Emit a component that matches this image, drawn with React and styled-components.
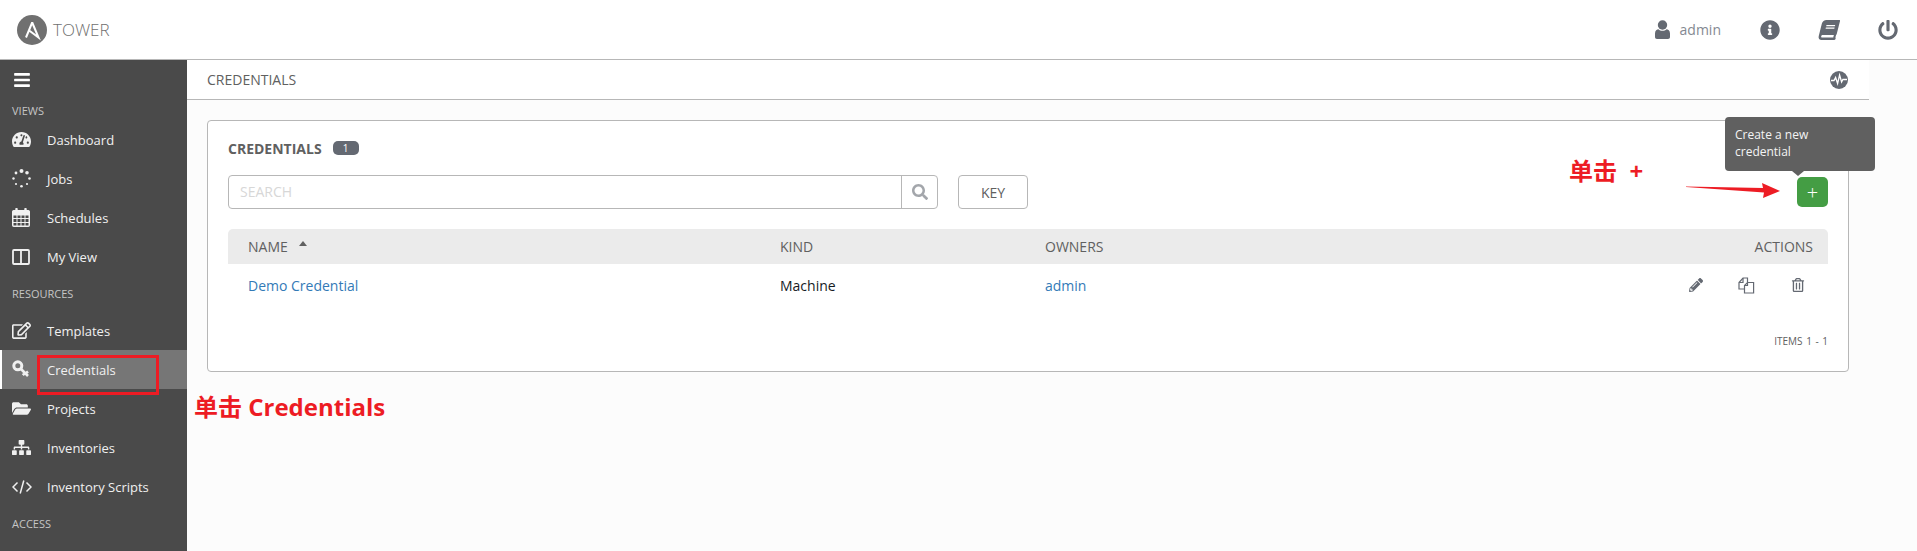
import styled, { createGlobalStyle } from 'styled-components';
import {
  FaBars,
  FaTachometerAlt,
  FaRegEdit,
  FaFolderOpen,
  FaSitemap,
  FaInfoCircle,
  FaBook,
  FaPowerOff,
  FaSearch,
  FaPencilAlt,
  FaRegTrashAlt,
} from 'react-icons/fa';

const GlobalStyle = createGlobalStyle`
  html, body {
    margin: 0;
    padding: 0;
    height: 100%;
    overflow: hidden;
    background: #fcfcfc;
    font-family: "Open Sans", "Noto Sans", sans-serif;
    color: #161b1f;
  }
  * { box-sizing: border-box; }
`;

const JobsIcon = () => (
  <svg width="19" height="19" viewBox="0 0 19 19" fill="currentColor">
    <circle cx="9.500" cy="2" r="2" />
    <circle cx="15" cy="3.800" r="1.800" />
    <circle cx="17.500" cy="9.500" r="1.300" />
    <circle cx="15" cy="15" r="1.100" />
    <circle cx="9.500" cy="17.300" r="1.300" />
    <circle cx="4" cy="15" r="1.100" />
    <circle cx="1.500" cy="9.500" r="1.200" />
    <circle cx="4" cy="4" r="1.400" />
  </svg>
);

const CalendarIcon = () => (
  <svg width="18" height="19" viewBox="0 0 18 19" fill="none" stroke="currentColor">
    <rect x="0.750" y="2.750" width="16.500" height="15.500" rx="1" strokeWidth="1.500" />
    <path d="M1 3h16v4H1z" fill="currentColor" />
    <path d="M1 10.500h16M1 14.500h16M5 7v11M9 7v11M13 7v11" strokeWidth="1" />
    <path d="M4.500 1v4M13.500 1v4" strokeWidth="2.400" strokeLinecap="round" />
  </svg>
);

const ColumnsIcon = () => (
  <svg width="18" height="16" viewBox="0 0 18 16" fill="none" stroke="currentColor">
    <rect x="1" y="1" width="16" height="14" rx="1" strokeWidth="1.800" />
    <path d="M9 1v14" strokeWidth="1.800" />
  </svg>
);

const KeyIcon = () => (
  <svg width="19" height="19" viewBox="0 0 19 19" fill="none" stroke="currentColor">
    <circle cx="5.800" cy="5.800" r="4" strokeWidth="3" />
    <path d="M8.500 8.500 16 16M13 13l-2.200 2.200M16 11.500l-3 2.500" strokeWidth="2.600" />
  </svg>
);

const CodeIcon = () => (
  <svg width="20" height="16" viewBox="0 0 20 16" fill="none" stroke="currentColor" strokeWidth="1.500">
    <path d="M5.500 3.500 1 8l4.500 4.500M14.500 3.500 19 8l-4.500 4.500M11.800 1.500 8.200 14.500" />
  </svg>
);

const UserIcon = () => (
  <svg width="15" height="19" viewBox="0 0 15 19" fill="currentColor">
    <circle cx="7.500" cy="5" r="4.700" />
    <path d="M0 13.500C0 10.500 2 9.500 3.500 9.300c1 1 2.400 1.500 4 1.500s3-.5 4-1.500c1.500.2 3.500 1.200 3.500 4.200V17c0 1.200-.8 2-2 2H2c-1.200 0-2-.8-2-2Z" />
  </svg>
);

const CopyIcon = () => (
  <svg width="17" height="17" viewBox="0 0 17 17" fill="none" stroke="currentColor" strokeWidth="1.200">
    <path d="M6.500 12H1V5.500L5 1h4.500v4" />
    <path d="M6.500 12V8.500L9.500 5.500H15.600V16H6.500V12Z" />
    <path d="M1 5.500h4V1M6.500 8.500h3v-3" />
  </svg>
);

const ActivityIcon = () => (
  <svg width="18" height="18" viewBox="0 0 18 18">
    <circle cx="9" cy="9" r="9" fill="#646972" />
    <path d="M1 9.500h3l1.600-3 2 6 2-8.500 2 7 1.300-2.500H17" fill="none" stroke="#fff" strokeWidth="1.300" />
  </svg>
);

const Logo = () => (
  <svg width="30" height="30" viewBox="0 0 30 30">
    <circle cx="15" cy="15" r="15" fill="#707070" />
    <path d="M15.200 7.500 9 22.500M15.200 7.500 21.500 22.500 11.500 15" fill="none" stroke="#fff" strokeWidth="2" />
  </svg>
);

const Page = styled.div`
  height: 100vh;
  display: flex;
  flex-direction: column;
  position: relative;
`;

const Header = styled.header`
  height: 60px;
  flex: none;
  background: #fff;
  border-bottom: 1px solid #b7b7b7;
  display: flex;
  align-items: center;
  justify-content: space-between;
  padding: 0 19px 0 17px;
`;

const Brand = styled.div`
  display: flex;
  align-items: center;
  gap: 6px;
  color: #707070;
  font-size: 17px;
  font-weight: 300;
`;

const TopNav = styled.div`
  display: flex;
  align-items: center;
  color: #646972;
  font-size: 20px;
`;

const UserBlock = styled.div`
  display: flex;
  align-items: center;
  gap: 10px;
  margin-right: 39px;
  span {
    font-size: 14px;
    color: #848992;
  }
`;

const TopIcon = styled.div`
  display: flex;
  margin-left: ${(p) => p.$gap}px;
  transform: ${(p) => (p.$skew ? 'skewX(-14deg)' : 'none')};
`;

const Body = styled.div`
  flex: 1;
  display: flex;
  min-height: 0;
`;

const Sidebar = styled.nav`
  width: 187px;
  flex: none;
  background: #4a4a4a;
  color: #fff;
  overflow: hidden;
`;

const MenuToggle = styled.div`
  height: 40px;
  display: flex;
  align-items: center;
  padding-left: 13px;
  font-size: 18px;
`;

const SectionLabel = styled.div`
  height: ${(p) => p.$height}px;
  padding-left: 12px;
  display: flex;
  align-items: center;
  font-size: 11px;
  color: #c5c5c5;
`;

const NavItem = styled.div`
  height: 39px;
  display: flex;
  align-items: center;
  font-size: 13px;
  color: #f0f0f0;
  padding-left: ${(p) => (p.$active ? 10 : 12)}px;
  background: ${(p) => (p.$active ? '#767676' : 'transparent')};
  border-left: ${(p) => (p.$active ? '2px solid #fff' : 'none')};
`;

const NavIcon = styled.span`
  width: 35px;
  flex: none;
  display: flex;
  align-items: center;
  font-size: 19px;
`;

const Main = styled.main`
  flex: 1;
  min-width: 0;
  padding-right: 48px;
`;

const Breadcrumb = styled.div`
  height: 40px;
  background: #fff;
  border-bottom: 1px solid #b7b7b7;
  display: flex;
  align-items: center;
  justify-content: space-between;
  padding: 0 21px 0 20px;
  font-size: 14px;
  color: #606060;
`;

const Card = styled.section`
  margin: 20px 20px 0;
  height: 252px;
  background: #fff;
  border: 1px solid #b7b7b7;
  border-radius: 4px;
  padding: 20px;
  position: relative;
`;

const CardTitle = styled.div`
  display: flex;
  align-items: center;
  gap: 11px;
  height: 14px;
  font-size: 14px;
  font-weight: 700;
  color: #606060;
`;

const Badge = styled.span`
  width: 26px;
  height: 14px;
  border-radius: 5px;
  background: #646972;
  color: #fff;
  font-size: 10px;
  font-weight: 400;
  display: flex;
  align-items: center;
  justify-content: center;
`;

const Toolbar = styled.div`
  display: flex;
  align-items: center;
  margin-top: 20px;
  height: 34px;
`;

const SearchBox = styled.div`
  width: 710px;
  height: 34px;
  display: flex;
  border: 1px solid #b7b7b7;
  border-radius: 4px;
`;

const SearchInput = styled.div`
  flex: 1;
  display: flex;
  align-items: center;
  padding: 0 0 1px 11px;
  font-size: 14px;
  color: #d7d7d7;
`;

const SearchButton = styled.div`
  width: 36px;
  border-left: 1px solid #b7b7b7;
  display: flex;
  align-items: center;
  justify-content: center;
  color: #a3a6ab;
  font-size: 16px;
`;

const KeyButton = styled.div`
  width: 70px;
  height: 34px;
  margin-left: 20px;
  border: 1px solid #b7b7b7;
  border-radius: 4px;
  display: flex;
  align-items: center;
  justify-content: center;
  font-size: 14px;
  color: #606060;
`;

const AddButton = styled.div`
  margin-left: auto;
  width: 31px;
  height: 30px;
  border-radius: 5px;
  background: #449d44;
  color: #fff;
  font-size: 20px;
  font-weight: 300;
  display: flex;
  align-items: center;
  justify-content: center;
  position: relative;
`;

const Tooltip = styled.div`
  position: absolute;
  right: -47px;
  bottom: 36px;
  width: 150px;
  height: 54px;
  padding: 9px 10px;
  background: #606060;
  border-radius: 4px;
  color: #f4f4f4;
  font-size: 12px;
  font-weight: 400;
  line-height: 17px;
  &::after {
    content: '';
    position: absolute;
    left: 67px;
    bottom: -5px;
    border-left: 6px solid transparent;
    border-right: 6px solid transparent;
    border-top: 5px solid #606060;
  }
`;

const Columns = styled.div`
  display: grid;
  grid-template-columns: 532px 265px 1fr 140px;
  align-items: center;
  padding: 0 15px 0 20px;
`;

const TableHead = styled(Columns)`
  margin-top: 20px;
  height: 35px;
  padding-bottom: 1px;
  background: #ebebeb;
  border-radius: 5px 5px 0 0;
  font-size: 14px;
  color: #606060;
`;

const SortCell = styled.div`
  display: flex;
  align-items: center;
  gap: 11px;
  &::after {
    content: '';
    margin-top: -6px;
    border-left: 4.500px solid transparent;
    border-right: 4.500px solid transparent;
    border-bottom: 5px solid #606060;
  }
`;

const RightCell = styled.div`
  text-align: right;
`;

const TableRow = styled(Columns)`
  height: 44px;
  padding-bottom: 2px;
  font-size: 14px;
  color: #161b1f;
`;

const LinkText = styled.span`
  color: #337ab7;
`;

const RowActions = styled.div`
  display: flex;
  align-items: center;
  justify-content: flex-end;
  color: #646972;
  font-size: 14px;
`;

const RowAction = styled.span`
  display: flex;
  width: 17px;
  justify-content: center;
  margin-left: ${(p) => p.$gap || 0}px;
  margin-right: ${(p) => p.$end || 0}px;
`;

const Pagination = styled.div`
  position: absolute;
  right: 20px;
  bottom: 23px;
  font-size: 10px;
  color: #606060;
  word-spacing: 1px;
`;

const Annotation = styled.div`
  position: absolute;
  left: ${(p) => p.$x}px;
  top: ${(p) => p.$y}px;
  color: #ed1c24;
  font-family: "Open Sans", "Noto Sans CJK SC", sans-serif;
  font-size: 24px;
  font-weight: 700;
  line-height: 30px;
  white-space: pre;
`;

const RedBox = styled.div`
  position: absolute;
  left: 37px;
  top: 355px;
  width: 122px;
  height: 40px;
  border: 3px solid #ed1c24;
`;

const RedArrow = styled.svg`
  position: absolute;
  left: 1686px;
  top: 182px;
`;

const views = [
  { label: 'Dashboard', icon: <FaTachometerAlt /> },
  { label: 'Jobs', icon: <JobsIcon /> },
  { label: 'Schedules', icon: <CalendarIcon /> },
  { label: 'My View', icon: <ColumnsIcon /> },
];

const resources = [
  { label: 'Templates', icon: <FaRegEdit /> },
  { label: 'Credentials', icon: <KeyIcon />, active: true },
  { label: 'Projects', icon: <FaFolderOpen /> },
  { label: 'Inventories', icon: <FaSitemap /> },
  { label: 'Inventory Scripts', icon: <CodeIcon /> },
];

const renderItem = (item) => (
  <NavItem key={item.label} $active={item.active}>
    <NavIcon>{item.icon}</NavIcon>
    {item.label}
  </NavItem>
);

const App = () => {
  return (
    <Page>
      <GlobalStyle />
      <Header>
        <Brand>
          <Logo />
          TOWER
        </Brand>
        <TopNav>
          <UserBlock>
            <UserIcon />
            <span>admin</span>
          </UserBlock>
          <TopIcon $gap={0}>
            <FaInfoCircle />
          </TopIcon>
          <TopIcon $gap={39} $skew>
            <FaBook />
          </TopIcon>
          <TopIcon $gap={39}>
            <FaPowerOff />
          </TopIcon>
        </TopNav>
      </Header>
      <Body>
        <Sidebar>
          <MenuToggle>
            <FaBars />
          </MenuToggle>
          <SectionLabel $height={20}>VIEWS</SectionLabel>
          {views.map(renderItem)}
          <SectionLabel $height={35}>RESOURCES</SectionLabel>
          {resources.map(renderItem)}
          <SectionLabel $height={35}>ACCESS</SectionLabel>
        </Sidebar>
        <Main>
          <Breadcrumb>
            CREDENTIALS
            <ActivityIcon />
          </Breadcrumb>
          <Card>
            <CardTitle>
              CREDENTIALS
              <Badge>1</Badge>
            </CardTitle>
            <Toolbar>
              <SearchBox>
                <SearchInput>SEARCH</SearchInput>
                <SearchButton>
                  <FaSearch />
                </SearchButton>
              </SearchBox>
              <KeyButton>KEY</KeyButton>
              <AddButton>
                +
                <Tooltip>Create a new credential</Tooltip>
              </AddButton>
            </Toolbar>
            <TableHead>
              <SortCell>NAME</SortCell>
              <div>KIND</div>
              <div>OWNERS</div>
              <RightCell>ACTIONS</RightCell>
            </TableHead>
            <TableRow>
              <LinkText>Demo Credential</LinkText>
              <div>Machine</div>
              <LinkText>admin</LinkText>
              <RowActions>
                <RowAction>
                  <FaPencilAlt />
                </RowAction>
                <RowAction $gap={34}>
                  <CopyIcon />
                </RowAction>
                <RowAction $gap={34} $end={7}>
                  <FaRegTrashAlt />
                </RowAction>
              </RowActions>
            </TableRow>
            <Pagination>ITEMS 1 - 1</Pagination>
          </Card>
        </Main>
      </Body>
      <RedBox />
      <Annotation $x={194} $y={392}>单击 Credentials</Annotation>
      <Annotation $x={1569} $y={156}>{'单击  +'}</Annotation>
      <RedArrow width="96" height="18" viewBox="0 0 96 18">
        <polygon points="0,4.500 77,6 76,1 94,9 77,16 78,10.500 0,5" fill="#ed1c24" />
      </RedArrow>
    </Page>
  );
};

export default App;
